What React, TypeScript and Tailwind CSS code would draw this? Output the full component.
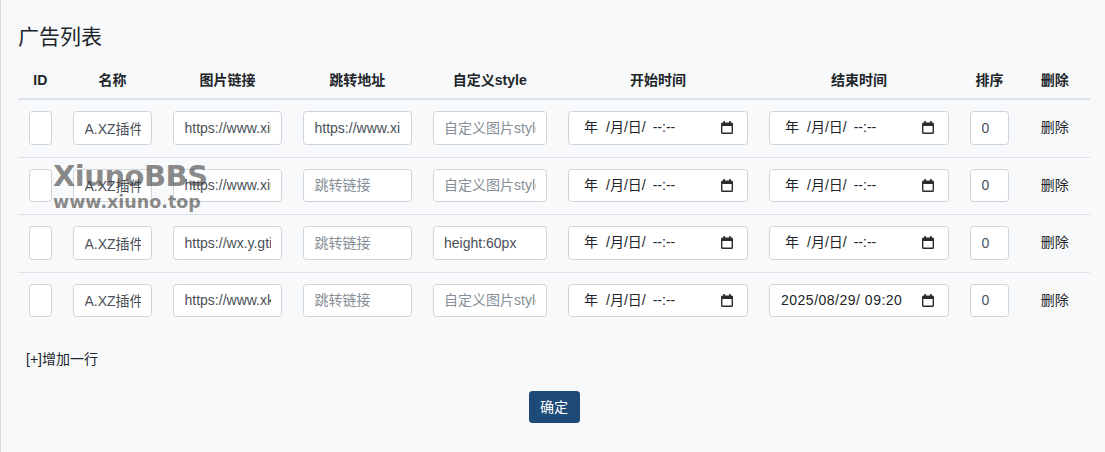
import React from "react";

function CalendarIcon() {
  return (
    <svg width="12" height="13" viewBox="0 0 12 13" className="shrink-0">
      <rect x="2.3" y="0" width="1.6" height="2.6" fill="#2b2b2b" />
      <rect x="8.1" y="0" width="1.6" height="2.6" fill="#2b2b2b" />
      <rect x="0.7" y="2.2" width="10.6" height="10.1" rx="0.8" fill="none" stroke="#2b2b2b" strokeWidth="1.4" />
      <rect x="0.7" y="2.2" width="10.6" height="2.8" fill="#2b2b2b" />
    </svg>
  );
}

function DateBox({ value }: { value?: string }) {
  if (value) {
    return (
      <div className="flex h-[33.5px] w-[180px] items-center rounded-[3.5px] border border-[#ced4da] bg-white pl-[11px] pr-[14px] text-[14px] text-[#212529]">
        <span className="flex-1 whitespace-pre tracking-[0.5px]">{value}</span>
        <CalendarIcon />
      </div>
    );
  }
  return (
    <div className="flex h-[33.5px] w-[180px] items-center rounded-[3.5px] border border-[#ced4da] bg-white pl-[15px] pr-[14px] text-[14px] text-[#212529]">
      <span className="flex flex-1 items-center">
        <span>年</span>
        <span className="ml-[8px]">/月/日/</span>
        <span className="ml-[7px]">--:--</span>
      </span>
      <CalendarIcon />
    </div>
  );
}

const inputCls =
  "block h-[33.5px] rounded-[3.5px] border border-[#ced4da] bg-white px-[10.5px] text-[14px] text-[#495057] placeholder:text-[#868e96] outline-none";

type Row = {
  img: string;
  link: string;
  style: string;
  end?: string;
};

const rows: Row[] = [
  { img: "https://www.xiuno.top/upload/ad1.png", link: "https://www.xiuno.top/", style: "" },
  { img: "https://www.xiuno.top/upload/ad2.png", link: "", style: "" },
  { img: "https://wx.y.gtimg.cn/ad3.png", link: "", style: "height:60px" },
  { img: "https://www.xkzy.net/ad4.png", link: "", style: "", end: "2025/08/29/ 09:20" },
];

export default function App() {
  const th = "pt-[11px] pb-[7px] text-center text-[14px] font-bold leading-[21px] text-[#212529] border-b-2 border-[#dee2e6]";
  const td = "pt-[11px] pb-[12px] px-[10.5px] align-top border-t border-[#dee2e6]";
  return (
    <div className="relative min-h-[452px] w-[1105px] border-l border-[#d9d9d9] bg-[#f8f9fa] pl-[17px] pt-[24px] font-['Liberation_Sans','Noto_Sans_CJK_SC',sans-serif] text-[#212529]">
      <h4 className="mb-[10px] text-[21px] leading-[25px] font-normal text-[#212529]">广告列表</h4>
      <table className="w-[1072px] table-fixed border-collapse">
        <colgroup>
          <col className="w-[44.5px]" />
          <col className="w-[100px]" />
          <col className="w-[130px]" />
          <col className="w-[129.5px]" />
          <col className="w-[135.5px]" />
          <col className="w-[201px]" />
          <col className="w-[201px]" />
          <col className="w-[60px]" />
          <col className="w-[70.5px]" />
        </colgroup>
        <thead>
          <tr>
            <th className={th}>ID</th>
            <th className={th}>名称</th>
            <th className={th}>图片链接</th>
            <th className={th}>跳转地址</th>
            <th className={th}>自定义style</th>
            <th className={th}>开始时间</th>
            <th className={th}>结束时间</th>
            <th className={th}>排序</th>
            <th className={th}>删除</th>
          </tr>
        </thead>
        <tbody>
          {rows.map((r, i) => (
            <tr key={i}>
              <td className={td}>
                <input className={`${inputCls} w-[23px]`} defaultValue="" />
              </td>
              <td className={td}>
                <input className={`${inputCls} w-[79px]`} defaultValue="A.XZ插件" />
              </td>
              <td className={td}>
                <input className={`${inputCls} w-[109px]`} defaultValue={r.img} />
              </td>
              <td className={td}>
                <input className={`${inputCls} w-[108.5px]`} defaultValue={r.link} placeholder="跳转链接" />
              </td>
              <td className={td}>
                <input className={`${inputCls} w-[114.5px]`} defaultValue={r.style} placeholder="自定义图片style" />
              </td>
              <td className={td}>
                <DateBox />
              </td>
              <td className={td}>
                <DateBox value={r.end} />
              </td>
              <td className={td}>
                <input className={`${inputCls} w-[39px]`} defaultValue="0" />
              </td>
              <td className={`${td} text-center`}>
                <a className="inline-block pt-[6px] text-[14px] leading-[21px] text-[#212529] cursor-pointer">删除</a>
              </td>
            </tr>
          ))}
        </tbody>
      </table>
      <div className="mt-[20px] ml-[8px] text-[14px] leading-[21px] text-[#212529]">
        <a className="cursor-pointer">[+]增加一行</a>
      </div>
      <div className="mt-[21px] flex w-[1072px] justify-center">
        <button className="h-[32px] w-[51px] rounded-[3.5px] bg-[#1e4a79] text-[14px] leading-[21px] text-white">
          确定
        </button>
      </div>
      <div className="pointer-events-none absolute left-[52px] top-[159px] font-['DejaVu_Sans',sans-serif] font-bold text-[rgba(60,60,60,0.6)]">
        <div className="text-[29px] leading-[34px] tracking-[-0.5px]">XiunoBBS</div>
        <div className="-mt-[1px] text-[17.5px] leading-[20px]">www.xiuno.top</div>
      </div>
    </div>
  );
}
